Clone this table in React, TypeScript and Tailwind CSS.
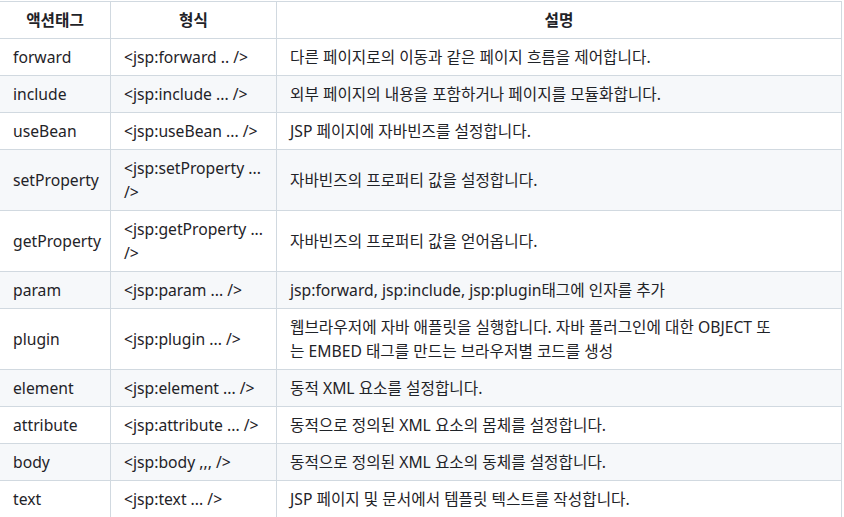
import { Fragment, ReactNode } from "react";

const rows: [string, string, ReactNode][] = [
  ["forward", "<jsp:forward .. />", "다른 페이지로의 이동과 같은 페이지 흐름을 제어합니다."],
  ["include", "<jsp:include ... />", "외부 페이지의 내용을 포함하거나 페이지를 모듈화합니다."],
  ["useBean", "<jsp:useBean ... />", "JSP 페이지에 자바빈즈를 설정합니다."],
  ["setProperty", "<jsp:setProperty ... />", "자바빈즈의 프로퍼티 값을 설정합니다."],
  ["getProperty", "<jsp:getProperty ... />", "자바빈즈의 프로퍼티 값을 얻어옵니다."],
  ["param", "<jsp:param ... />", "jsp:forward, jsp:include, jsp:plugin태그에 인자를 추가"],
  [
    "plugin",
    "<jsp:plugin ... />",
    <Fragment>
      웹브라우저에 자바 애플릿을 실행합니다. 자바 플러그인에 대한 OBJECT 또
      <br />
      는 EMBED 태그를 만드는 브라우저별 코드를 생성
    </Fragment>,
  ],
  ["element", "<jsp:element ... />", "동적 XML 요소를 설정합니다."],
  ["attribute", "<jsp:attribute ... />", "동적으로 정의된 XML 요소의 몸체를 설정합니다."],
  ["body", "<jsp:body ,,, />", "동적으로 정의된 XML 요소의 동체를 설정합니다."],
  ["text", "<jsp:text ... />", "JSP 페이지 및 문서에서 템플릿 텍스트를 작성합니다."],
];

export default function App() {
  return (
    <main
      className="w-[844px] h-[517px] overflow-hidden bg-white text-[#1f2328] text-[15.7px] leading-6"
      style={{ fontFamily: '"Noto Sans", "Noto Sans CJK KR", sans-serif' }}
    >
      <table className="table-fixed border-collapse w-[842px] -ml-px mt-px">
        <colgroup>
          <col className="w-[111px]" />
          <col className="w-[166px]" />
          <col className="w-[565px]" />
        </colgroup>
        <thead>
          <tr className="bg-white">
            <th className="border border-[#d1d9e0] px-3 py-1.5 font-bold text-center">액션태그</th>
            <th className="border border-[#d1d9e0] px-3 py-1.5 font-bold text-center">형식</th>
            <th className="border border-[#d1d9e0] px-3 py-1.5 font-bold text-center">설명</th>
          </tr>
        </thead>
        <tbody>
          {rows.map((r, i) => (
            <tr key={r[0]} className={i % 2 === 1 ? "bg-[#f6f8fa]" : "bg-white"}>
              <td className="border border-[#d1d9e0] pl-[13px] pr-3 py-1.5">{r[0]}</td>
              <td className="border border-[#d1d9e0] pl-[13px] pr-3 py-1.5">{r[1]}</td>
              <td className="border border-[#d1d9e0] pl-[13px] pr-3 py-1.5">{r[2]}</td>
            </tr>
          ))}
        </tbody>
      </table>
    </main>
  );
}
